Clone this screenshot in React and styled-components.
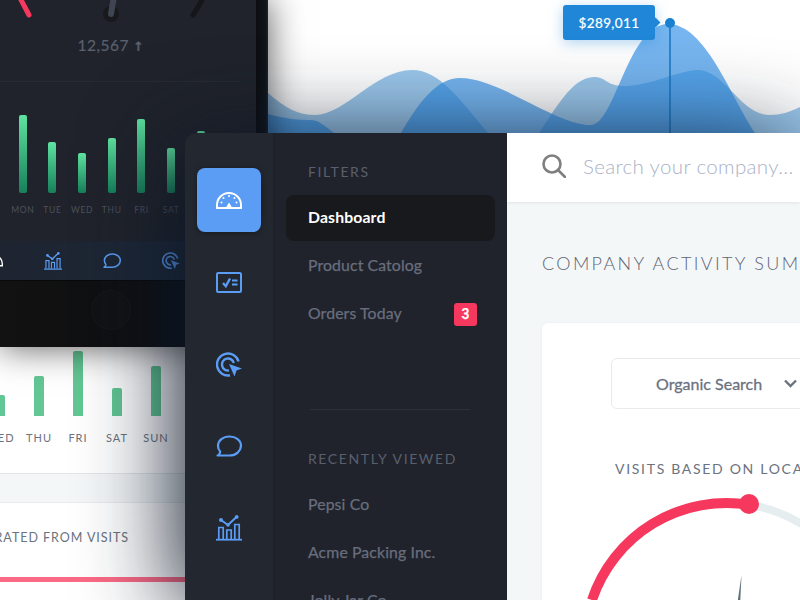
import React from 'react'
import styled, { createGlobalStyle } from 'styled-components'

const GlobalStyle = createGlobalStyle`
  html, body {
    margin: 0;
    padding: 0;
    width: 800px;
    height: 600px;
    overflow: hidden;
    background: #fff;
    font-family: "Lato", "Open Sans", sans-serif;
  }
`

const Stage = styled.div`
  display: grid;
  grid-template-columns: 185px 83px 532px;
  grid-template-rows: 133px 214px 253px;
  width: 800px;
  height: 600px;
  overflow: hidden;
`

/* phone, top left */
const Phone = styled.section`
  grid-column: 1 / 3;
  grid-row: 1 / 3;
  z-index: 2;
  display: flex;
  box-shadow: 0 0 34px rgba(0, 0, 0, 0.66);
`
const Screen = styled.div`
  width: 256px;
  display: flex;
  flex-direction: column;
  overflow: hidden;
  background: linear-gradient(150deg, #20232b 62%, #182433);
`
const Bezel = styled.div`
  width: 12px;
  background: linear-gradient(90deg, #0c0d10, #10151b 80%, #1a2430);
`
const Dial = styled.svg`
  display: block;
  flex: none;
`
const Reading = styled.div`
  height: 30px;
  line-height: 30px;
  text-align: center;
  width: 222px;
  font-size: 15.5px;
  letter-spacing: 0.5px;
  color: #5a606e;
  -webkit-text-stroke: 0.2px #5a606e;
`
const ReadingArrow = styled.span`
  margin-left: 4px;
  font-family: "DejaVu Sans", sans-serif;
  font-size: 13px;
  font-weight: 700;
`
const Rule = styled.div`
  margin-top: 21px;
  width: 240px;
  height: 1px;
  background: #272a33;
`
const Week = styled.div`
  display: flex;
  height: ${(p) => p.$height}px;
  margin-left: ${(p) => p.$offset}px;
`
const Day = styled.div`
  flex: none;
  width: ${(p) => p.$width}px;
  display: flex;
  flex-direction: column;
  justify-content: flex-end;
  align-items: center;
`
const DarkBar = styled.div`
  width: 8px;
  height: ${(p) => p.$h}px;
  border-radius: 2px;
  background: linear-gradient(180deg, #5fe3a0, #16805a);
`
const LightBar = styled.div`
  width: 10px;
  height: ${(p) => p.$h}px;
  border-radius: 2px 2px 0 0;
  background: #62c794;
`
const DayName = styled.div`
  margin-top: ${(p) => p.$gap}px;
  height: 14px;
  line-height: 14px;
  white-space: nowrap;
  font-size: ${(p) => p.$size}px;
  letter-spacing: ${(p) => p.$spacing}px;
  color: ${(p) => p.$color};
`
const TabBar = styled.div`
  margin-top: 24px;
  flex: none;
  height: 39px;
  display: flex;
  align-items: center;
  gap: 41px;
  background: linear-gradient(90deg, #1e2430, #1c2a3c);
  border-bottom: 1px solid #08090b;
  & > svg:first-child {
    margin-left: -15px;
  }
`
const HomeStrip = styled.div`
  flex: 1;
  display: flex;
  align-items: flex-start;
  padding: 10px 0 0 92px;
  background: linear-gradient(90deg, #121212, #0e0f11 55%, #0a1420);
`
const HomeButton = styled.div`
  width: 38px;
  height: 38px;
  border-radius: 50%;
  background: #111214;
  box-shadow: 0 0 0 1px #161719;
`

/* revenue chart, top right */
const ChartPanel = styled.section`
  grid-column: 3;
  grid-row: 1;
  z-index: 1;
  position: relative;
  overflow: hidden;
  background: #fff;
`
const Waves = styled.svg`
  display: block;
`
const Tooltip = styled.div`
  position: absolute;
  left: 295px;
  top: 5px;
  width: 92px;
  height: 35px;
  border-radius: 3px;
  background: #2087d8;
  box-shadow: 0 3px 14px rgba(32, 135, 216, 0.35);
  color: #fff;
  font-size: 13.5px;
  letter-spacing: 0.4px;
  -webkit-text-stroke: 0.2px #fff;
  line-height: 36px;
  text-align: center;
  &::after {
    content: '';
    position: absolute;
    right: -4px;
    top: 14px;
    width: 7px;
    height: 7px;
    background: #2087d8;
    transform: rotate(45deg);
  }
`

/* stats card, bottom left */
const StatsPanel = styled.section`
  grid-column: 1;
  grid-row: 3;
  z-index: 1;
  overflow: hidden;
  background: #fff;
`
const Band = styled.div`
  margin-top: 28px;
  height: 28px;
  background: #f4f7f8;
  border-top: 1px solid #e3e6e8;
  border-bottom: 1px solid #e9ecee;
`
const StatsTitle = styled.div`
  margin-top: 25px;
  height: 20px;
  line-height: 20px;
  display: flex;
  justify-content: flex-end;
  padding-right: 56px;
  white-space: nowrap;
  font-size: 12.5px;
  letter-spacing: 0.95px;
  color: #6b7280;
`
const Progress = styled.div`
  margin-top: 29px;
  height: 5px;
  background: #fb6a85;
`

/* app window */
const AppWindow = styled.section`
  grid-column: 2 / 4;
  grid-row: 2 / 4;
  z-index: 3;
  display: flex;
  overflow: hidden;
  border-top-left-radius: 12px;
  background: #23272f;
`
const WindowShadow = styled.div`
  grid-column: 2 / 4;
  grid-row: 2 / 4;
  z-index: 3;
  border-top-left-radius: 12px;
  box-shadow: -10px 10px 90px rgba(12, 22, 38, 0.92);
`
const Rail = styled.nav`
  flex: none;
  width: 90px;
  padding-top: 26px;
  box-sizing: border-box;
  display: flex;
  flex-direction: column;
  align-items: center;
  border-right: 2px solid #1e2127;
`
const RailItem = styled.div`
  flex: none;
  height: 82px;
  display: flex;
  align-items: center;
  justify-content: center;
`
const ActiveTile = styled.div`
  width: 64px;
  height: 64px;
  border-radius: 8px;
  background: #5b9df5;
  display: flex;
  align-items: center;
  justify-content: center;
  box-shadow: 0 1px 6px rgba(0, 0, 0, 0.35);
`
const Menu = styled.aside`
  flex: none;
  width: 232px;
  box-sizing: border-box;
  padding-top: 29px;
  background: #20232b;
  overflow: hidden;
`
const MenuHeading = styled.div`
  height: 20px;
  line-height: 20px;
  margin-left: 33px;
  margin-top: ${(p) => p.$top || 0}px;
  margin-bottom: ${(p) => p.$bottom}px;
  font-size: 14px;
  letter-spacing: 1.6px;
  color: #5a5f6d;
`
const MenuItem = styled.div`
  height: 46px;
  box-sizing: border-box;
  margin: 0 12px 2px 11px;
  padding: 0 18px 4px 22px;
  display: flex;
  align-items: center;
  justify-content: space-between;
  border-radius: 8px;
  font-size: 15.8px;
  letter-spacing: 0.12px;
  font-weight: ${(p) => (p.$active ? 700 : 400)};
  -webkit-text-stroke: ${(p) => (p.$active ? '0' : '0.25px')};
  color: ${(p) => (p.$active ? '#fff' : '#686e7e')};
  background: ${(p) => (p.$active ? '#18191d' : 'transparent')};
`
const Badge = styled.span`
  width: 23px;
  height: 23px;
  line-height: 23px;
  margin-top: 4px;
  border-radius: 3px;
  text-align: center;
  font-family: "Roboto", sans-serif;
  font-size: 14px;
  font-weight: 500;
  color: #fff;
  background: #f7385e;
`
const MenuRule = styled.div`
  margin: 72px 0 0 35px;
  width: 160px;
  height: 1px;
  background: #2c303a;
`
const Content = styled.main`
  flex: 1;
  min-width: 0;
  background: #f4f7f8;
  overflow: hidden;
`
const SearchBar = styled.div`
  height: 69px;
  box-sizing: border-box;
  padding: 0 0 3px 35px;
  display: flex;
  align-items: center;
  gap: 17px;
  background: #fff;
  box-shadow: 0 1px 3px rgba(0, 0, 0, 0.08);
`
const SearchText = styled.div`
  white-space: nowrap;
  font-size: 20.5px;
  font-weight: 300;
  letter-spacing: 0.35px;
  color: #aab3c6;
`
const PageTitle = styled.h1`
  margin: 49px 0 48px 35px;
  height: 24px;
  line-height: 24px;
  white-space: nowrap;
  font-size: 18px;
  font-weight: 300;
  letter-spacing: 2.35px;
  color: #5f6575;
`
const Card = styled.div`
  margin-left: 35px;
  width: 500px;
  height: 400px;
  padding: 35px 0 0 69px;
  box-sizing: border-box;
  border-radius: 6px 0 0 0;
  background: #fff;
  box-shadow: 0 0 3px rgba(0, 0, 0, 0.05);
`
const Select = styled.div`
  width: 300px;
  height: 51px;
  box-sizing: border-box;
  padding-left: 44px;
  display: flex;
  align-items: center;
  gap: 22px;
  border: 1px solid #e8ebee;
  border-radius: 6px;
  font-size: 16px;
  font-weight: 400;
  -webkit-text-stroke: 0.3px #6b7280;
  color: #6b7280;
`
const CardLabel = styled.div`
  margin: 50px 0 0 4px;
  height: 20px;
  line-height: 20px;
  white-space: nowrap;
  font-size: 14px;
  letter-spacing: 1.7px;
  color: #6b7280;
`
const GaugeArt = styled.svg`
  display: block;
  margin: 11px 0 0 -31px;
`

const blue = '#5b9df5'

const GaugeIcon = ({ color = '#fff', size = 26 }) => (
  <svg width={size} height={size * 18 / 26} viewBox="0 0 26 18" fill="none">
    <path d="M1 17V14a12 12 0 0 1 24 0v3z" stroke={color} strokeWidth="2" />
    <path d="M10 16.5l3-5 3 5z" fill={color} />
    <g fill={color}>
      <circle cx="13" cy="5" r="1" />
      <circle cx="7.5" cy="7" r="1" />
      <circle cx="18.5" cy="7" r="1" />
      <circle cx="5.5" cy="11.5" r="1" />
      <circle cx="20.5" cy="11.5" r="1" />
    </g>
  </svg>
)

const ChecklistIcon = ({ size = 26 }) => (
  <svg width={size} height={size * 21 / 26} viewBox="0 0 26 21" fill="none" stroke={blue}>
    <rect x="1" y="1" width="24" height="19" rx="1.2" strokeWidth="2" />
    <path d="M7 11l2.8 3.2L14 6.5" strokeWidth="2.4" />
    <path d="M16 8.5h5.5M16 12.5h5.5" strokeWidth="2" />
  </svg>
)

const TargetIcon = ({ size = 26, color = blue }) => (
  <svg width={size} height={size * 25 / 26} viewBox="0 0 26 25" fill="none" stroke={color} strokeWidth="2.4">
    <path d="M22.6 9.5A11 11 0 1 0 14 23.3" />
    <path d="M17.8 11A6 6 0 1 0 13 18.4" />
    <path d="M13 12l13 4.5-5.5 2-2 6z" fill={color} stroke="none" />
  </svg>
)

const ChatIcon = ({ size = 26, color = blue }) => (
  <svg width={size} height={size * 22 / 26} viewBox="0 0 26 22" fill="none" stroke={color} strokeWidth="2.2" strokeLinejoin="round">
    <path d="M1.5 20.5C3 20 4 18.5 4.2 16.5 2.7 15 2 13 2 11 2 5.5 7 1.5 13.5 1.5S25 5.5 25 10.5C25 16 20 20.5 13.5 20.5z" />
  </svg>
)

const ChartIcon = ({ size = 26, color = blue }) => (
  <svg width={size} height={size} viewBox="0 0 26 26" fill="none" stroke={color} strokeWidth="1.7">
    <path d="M0 24.7h26" strokeWidth="1.8" />
    <path d="M2.8 24V12.5h4.4V24M10.8 24v-9h4.4v9M18.8 24V9.5h4.4V24" />
    <path d="M5 5l7 5 8.7-8.3" strokeWidth="2" />
    <circle cx="5" cy="5" r="2" fill={color} stroke="none" />
    <circle cx="12" cy="10" r="1.7" fill={color} stroke="none" />
    <circle cx="20.7" cy="1.9" r="1.9" fill={color} stroke="none" />
  </svg>
)

const phoneWeek = [
  ['MON', 78],
  ['TUE', 51],
  ['WED', 40],
  ['THU', 55],
  ['FRI', 74],
  ['SAT', 45],
  ['SUN', 62],
]
const panelWeek = [
  ['WED', 21],
  ['THU', 40],
  ['FRI', 65],
  ['SAT', 28],
  ['SUN', 50],
]

const App = () => (
  <Stage>
    <GlobalStyle />

    <Phone>
      <Screen>
        <Dial width="256" height="30" viewBox="0 0 256 30" fill="none">
          <path d="M19 -4L29 15" stroke="#f7385e" strokeWidth="5" strokeLinecap="round" />
          <path d="M193 15C197 9 200 4 204 -4" stroke="#14161a" strokeWidth="5" strokeLinecap="round" />
          <circle cx="111" cy="14" r="8" fill="#17191d" />
          <path d="M111 14L114 -4" stroke="#3f4552" strokeWidth="6" strokeLinecap="round" />
        </Dial>
        <Reading>12,567<ReadingArrow>↑</ReadingArrow></Reading>
        <Rule />
        <Week $height={135} $offset={8}>
          {phoneWeek.map(([name, h]) => (
            <Day key={name} $width={29.67}>
              <DarkBar $h={h} />
              <DayName $gap={10} $size={8.5} $spacing={0.7} $color="#4c515e">{name}</DayName>
            </Day>
          ))}
        </Week>
        <TabBar>
          <GaugeIcon size={18} />
          <ChartIcon size={18} />
          <ChatIcon size={18} />
          <TargetIcon size={18} />
        </TabBar>
        <HomeStrip>
          <HomeButton />
        </HomeStrip>
      </Screen>
      <Bezel />
    </Phone>

    <ChartPanel>
      <Waves width="532" height="133" viewBox="268 0 532 133">
        <path
          d="M268 93C285 108 298 115 315 115C345 115 375 70 412 70C440 70 460 100 488 133L539 133C555 110 572 77 594 77C607 77 605 86 625 86C650 86 680 70 698 70C725 70 740 115 770 115C780 115 790 112 800 107L800 133L268 133Z"
          fill="#3f94d8"
          fillOpacity="0.52"
        />
        <path
          d="M268 114C285 119 300 120 312 120C320 121 326 127 334 133L268 133ZM401 133C420 100 438 78 460 78C500 78 555 125 591 125C615 125 628 24 668 24C705 24 730 95 755 133Z"
          fill="#2f8fe6"
          fillOpacity="0.66"
        />
        <path d="M670 23V133" stroke="#1a75c0" strokeWidth="1.5" />
        <circle cx="670" cy="23" r="5" fill="#1a80d0" />
      </Waves>
      <Tooltip>$289,011</Tooltip>
    </ChartPanel>

    <StatsPanel>
      <Week $height={98} $offset={-19.5}>
        {panelWeek.map(([name, h]) => (
          <Day key={name} $width={39}>
            <LightBar $h={h} />
            <DayName $gap={15} $size={11} $spacing={1} $color="#6b7280">{name}</DayName>
          </Day>
        ))}
      </Week>
      <Band />
      <StatsTitle>GENERATED FROM VISITS</StatsTitle>
      <Progress />
    </StatsPanel>

    <WindowShadow />
    <AppWindow>
      <Rail>
        <RailItem>
          <ActiveTile>
            <GaugeIcon />
          </ActiveTile>
        </RailItem>
        <RailItem><ChecklistIcon /></RailItem>
        <RailItem><TargetIcon /></RailItem>
        <RailItem><ChatIcon /></RailItem>
        <RailItem><ChartIcon /></RailItem>
      </Rail>

      <Menu>
        <MenuHeading $bottom={13}>FILTERS</MenuHeading>
        <MenuItem $active>Dashboard</MenuItem>
        <MenuItem>Product Catolog</MenuItem>
        <MenuItem>
          Orders Today
          <Badge>3</Badge>
        </MenuItem>
        <MenuRule />
        <MenuHeading $top={39} $bottom={13}>RECENTLY VIEWED</MenuHeading>
        <MenuItem>Pepsi Co</MenuItem>
        <MenuItem>Acme Packing Inc.</MenuItem>
        <MenuItem>Jolly Jar Co</MenuItem>
      </Menu>

      <Content>
        <SearchBar>
          <svg width="24" height="24" viewBox="0 0 24 24" fill="none" stroke="#7f7f7f" strokeWidth="2.6">
            <circle cx="10" cy="10" r="8.5" />
            <path d="M16 16l7 7" strokeLinecap="round" />
          </svg>
          <SearchText>Search your company...</SearchText>
        </SearchBar>
        <PageTitle>COMPANY ACTIVITY SUMMARY</PageTitle>
        <Card>
          <Select>
            Organic Search
            <svg width="13" height="9" viewBox="0 0 13 9" fill="none" stroke="#6b7280" strokeWidth="2.4">
              <path d="M1 1.5l5.5 5.5L12 1.5" />
            </svg>
          </Select>
          <CardLabel>VISITS BASED ON LOCATION</CardLabel>
          <GaugeArt width="260" height="120" viewBox="580 490 260 120" fill="none">
            <path d="M749 504.7A142 142 0 0 1 869 645" stroke="#e6edef" strokeWidth="8" />
            <path d="M592 600A142 142 0 0 1 749 504.7" stroke="#f7385e" strokeWidth="10" />
            <circle cx="749" cy="504" r="10" fill="#f7385e" />
            <path d="M741.5 575L737 606L740 606Z" fill="#5f7078" />
          </GaugeArt>
        </Card>
      </Content>
    </AppWindow>
  </Stage>
)

export default App
